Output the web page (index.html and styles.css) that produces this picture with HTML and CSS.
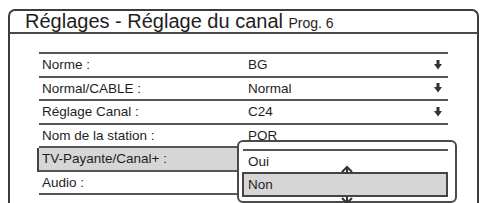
FILE: index.html
```html
<!DOCTYPE html>
<html>
<head>
    <title>Réglages - Réglage du canal</title>
    <meta charset="UTF-8">
    <meta name="viewport" content="width=device-width, initial-scale=1.0">
    <link rel="stylesheet" href="styles.css">
</head>
<body>
    <div class="frame">
        <div class="title">Réglages - Réglage du canal <span class="prog">Prog. 6</span></div>

        <div class="settings">
            <div class="row">
                <span class="label">Norme :</span>
                <span class="value">BG</span>
                <svg class="arrow" width="8" height="10" viewBox="0 0 8 10"><rect x="2.5" y="0" width="3" height="5"/><polygon points="0,4 8,4 4,9.5"/></svg>
            </div>
            <div class="row">
                <span class="label">Normal/CABLE :</span>
                <span class="value">Normal</span>
                <svg class="arrow" width="8" height="10" viewBox="0 0 8 10"><rect x="2.5" y="0" width="3" height="5"/><polygon points="0,4 8,4 4,9.5"/></svg>
            </div>
            <div class="row">
                <span class="label">Réglage Canal :</span>
                <span class="value">C24</span>
                <svg class="arrow" width="8" height="10" viewBox="0 0 8 10"><rect x="2.5" y="0" width="3" height="5"/><polygon points="0,4 8,4 4,9.5"/></svg>
            </div>
            <div class="row">
                <span class="label">Nom de la station :</span>
                <span class="value">PQR</span>
            </div>
            <div class="row current">
                <span class="label">TV-Payante/Canal+ :</span>
                <span class="value"></span>
            </div>
            <div class="row">
                <span class="label">Audio :</span>
                <span class="value"></span>
            </div>

            <div class="popup">
                <div class="separator"></div>
                <div class="option">Oui</div>
                <div class="option selected">Non</div>
                <svg class="scroll up" width="12" height="8" viewBox="0 0 12 8"><polyline points="1,7 6,2 11,7"/><line x1="6" y1="2" x2="6" y2="8"/></svg>
                <svg class="scroll down" width="12" height="8" viewBox="0 0 12 8"><polyline points="1,1 6,6 11,1"/><line x1="6" y1="0" x2="6" y2="6"/></svg>
            </div>
        </div>
    </div>
</body>
</html>
```

FILE: styles.css
```css
html, body {
    margin: 0;
    height: 203px;
    overflow: hidden;
    background: #fff;
}
body {
    padding: 9px 0 0 8px;
    box-sizing: border-box;
    font-family: "Liberation Sans", Arial, sans-serif;
    color: #1e1e1e;
}
.frame {
    width: 471px;
    height: 230px;
    box-sizing: border-box;
    border: 2px solid #3c3c3c;
    border-bottom: none;
    border-radius: 7px 7px 0 0;
}
.title {
    height: 21px;
    line-height: 21px;
    padding-left: 15px;
    font-size: 20px;
    white-space: nowrap;
    border-bottom: 2px solid #4a4a4a;
}
.prog {
    font-size: 14px;
}
.settings {
    position: relative;
    width: 409px;
    margin: 18px 0 0 29px;
    border-top: 2px solid #555;
}
.row {
    display: grid;
    grid-template-columns: 209px 1fr 14px;
    align-items: center;
    height: 21.5px;
    font-size: 13.5px;
    border-bottom: 2px solid #555;
}
.label {
    padding-left: 3px;
}
.row.current {
    background: #d6d6d6;
    box-shadow: -2px 0 0 #444;
}
.arrow {
    fill: #333;
}
.popup {
    position: absolute;
    left: 198px;
    top: 86px;
    width: 220px;
    height: 63px;
    box-sizing: border-box;
    padding: 7px 7px 0 3px;
    background: #fff;
    border: 2px solid #4a4a4a;
    border-radius: 6px;
    font-size: 13.5px;
}
.separator {
    margin-left: 1px;
    border-top: 2px solid #555;
}
.option {
    height: 21px;
    line-height: 21px;
    padding-left: 6px;
}
.option.selected {
    padding-left: 4px;
    border: 2px solid #444;
    background: #d6d6d6;
}
.scroll {
    position: absolute;
    left: 102px;
    fill: none;
    stroke: #333;
    stroke-width: 2;
}
.scroll.up {
    top: 23px;
}
.scroll.down {
    top: 55px;
}
```
